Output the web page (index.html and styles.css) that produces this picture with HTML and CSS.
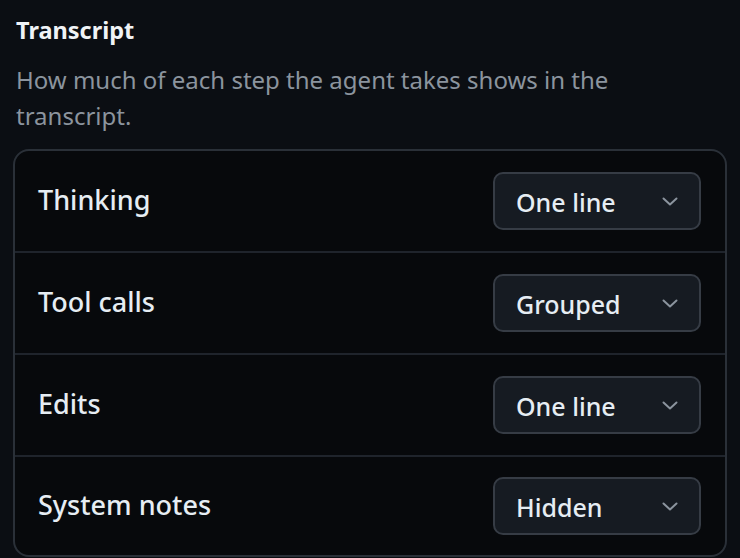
FILE: index.html
```html
<!DOCTYPE html>
<html lang="en">
<head>
<meta charset="utf-8">
<title>Transcript settings</title>
<link rel="stylesheet" href="styles.css">
</head>
<body>
<main class="page">
  <h2 class="title">Transcript</h2>
  <p class="desc">How much of each step the agent takes shows in the transcript.</p>
  <section class="card">
    <div class="row">
      <span class="label">Thinking</span>
      <button class="select" type="button"><span class="value">One line</span><svg class="chev" viewBox="0 0 16 9" width="16" height="9"><path d="M1.5 1.5 L8 7.5 L14.5 1.5"/></svg></button>
    </div>
    <div class="row">
      <span class="label">Tool calls</span>
      <button class="select" type="button"><span class="value">Grouped</span><svg class="chev" viewBox="0 0 16 9" width="16" height="9"><path d="M1.5 1.5 L8 7.5 L14.5 1.5"/></svg></button>
    </div>
    <div class="row">
      <span class="label">Edits</span>
      <button class="select" type="button"><span class="value">One line</span><svg class="chev" viewBox="0 0 16 9" width="16" height="9"><path d="M1.5 1.5 L8 7.5 L14.5 1.5"/></svg></button>
    </div>
    <div class="row">
      <span class="label">System notes</span>
      <button class="select" type="button"><span class="value">Hidden</span><svg class="chev" viewBox="0 0 16 9" width="16" height="9"><path d="M1.5 1.5 L8 7.5 L14.5 1.5"/></svg></button>
    </div>
  </section>
</main>
</body>
</html>
```

FILE: styles.css
```css
html, body {
  margin: 0;
  padding: 0;
  background: #0b0e13;
}

body {
  font-family: "Noto Sans", "Open Sans", sans-serif;
  color: #e6edf3;
}

.page {
  padding: 14px 13px 0 13px;
}

.title {
  margin: 0 0 0 3px;
  font-size: 23.5px;
  line-height: 32px;
  font-weight: 700;
  color: #f0f3f6;
}

.desc {
  margin: 16px 0 0 3px;
  font-size: 24px;
  line-height: 36px;
  color: #8b949e;
  max-width: 640px;
}

.card {
  margin-top: 15px;
  width: 714px;
  box-sizing: border-box;
  border: 2px solid #2a3038;
  border-radius: 16px;
  background: #07090c;
  overflow: hidden;
}

.row {
  display: flex;
  align-items: center;
  justify-content: space-between;
  height: 100px;
  padding: 0 24px 0 23px;
  border-top: 2px solid #1f242c;
}

.row:first-child {
  border-top: none;
}

.row:last-child {
  height: 98px;
}

.label {
  font-size: 27px;
  font-weight: 500;
  color: #e6edf3;
  margin-top: -4px;
}

.select {
  display: flex;
  align-items: center;
  justify-content: space-between;
  width: 208px;
  height: 58px;
  box-sizing: border-box;
  padding: 0 21px 0 21px;
  background: #161b22;
  border: 2px solid #363c45;
  border-radius: 10px;
  font-family: "Noto Sans", "Open Sans", sans-serif;
  font-size: 25px;
  font-weight: 500;
  color: #e6edf3;
  cursor: pointer;
}

.value {
  line-height: 1;
  margin-top: 2px;
}

.chev {
  fill: none;
  stroke: #8b949e;
  stroke-width: 2;
  stroke-linecap: round;
  stroke-linejoin: round;
}
```
